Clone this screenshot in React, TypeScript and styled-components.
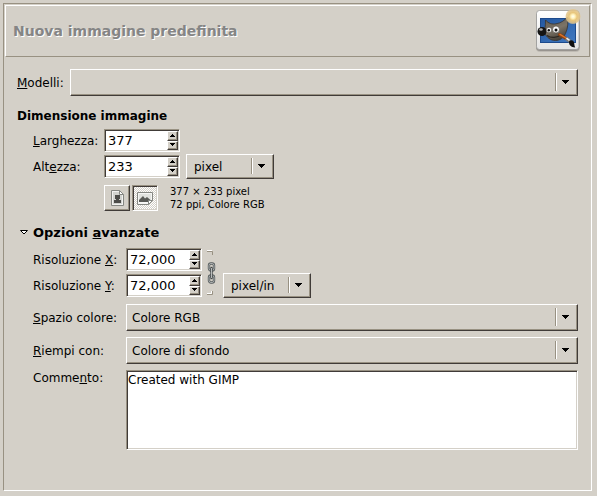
import React, { useId, useState } from 'react';
import styled, { createGlobalStyle, css } from 'styled-components';

const c = {
  bg: '#d4d0c8',
  light: '#ffffff',
  mid: '#989182',
  dark: '#403b38',
  title: '#858585',
};

const GlobalStyle = createGlobalStyle`
  *, *::before, *::after { box-sizing: border-box; }
  html, body, #root { height: 100%; }
  body {
    margin: 0;
    background: ${c.bg};
    color: #000;
    font: 12px/15px "DejaVu Sans", Verdana, sans-serif;
  }
  button, input, select, textarea { font: inherit; color: inherit; margin: 0; }
`;

const raised = css`
  border: 1px solid;
  border-color: ${c.light} ${c.dark} ${c.dark} ${c.light};
  box-shadow: inset -1px -1px ${c.mid};
`;

const sunken = css`
  border: 1px solid;
  border-color: ${c.mid} ${c.light} ${c.light} ${c.mid};
  box-shadow: inset 1px 1px ${c.dark}, inset -1px -1px ${c.bg};
`;

const Page = styled.div`
  display: flex;
  min-height: 100%;
  padding: 3px 5px 5px 3px;
`;

const Frame = styled.form`
  flex: 1;
  min-width: 0;
  border: 1px solid;
  border-color: ${c.mid} ${c.light} ${c.light} ${c.mid};
  padding: 1px;
`;

const Header = styled.header`
  display: flex;
  align-items: center;
  justify-content: space-between;
  height: 52px;
  padding: 0 9px 0 7px;
  border: 1px solid;
  border-color: ${c.light} ${c.mid} ${c.mid} ${c.light};
`;

const Title = styled.h1`
  margin: 0;
  font-size: 14px;
  line-height: 20px;
  font-weight: 700;
  color: ${c.title};
  text-shadow: 1px 1px ${c.light};
`;

const Content = styled.div`
  padding: 12px 12px 0;
`;

const TemplateRow = styled.div`
  display: grid;
  grid-template-columns: auto 1fr;
  column-gap: 6px;
  align-items: center;
`;

const Section = styled.section`
  margin-top: 13px;
`;

const SectionTitle = styled.h2`
  margin: 0 0 4px;
  font-size: 12px;
  line-height: 15px;
  font-weight: 700;
`;

const Expander = styled.button`
  display: flex;
  align-items: center;
  gap: 4px;
  margin: 14px 0 7px;
  padding: 0 0 0 2px;
  border: 0;
  background: none;
  font-size: 13px;
  line-height: 15px;
  font-weight: 700;
`;

const Fields = styled.div<{ $label: number }>`
  display: grid;
  grid-template-columns: ${p => p.$label}px minmax(0, 1fr);
  row-gap: 6px;
  padding-left: 16px;
`;

const Pairs = styled.div<{ $label: number }>`
  grid-column: 1 / -1;
  display: grid;
  grid-template-columns: ${p => p.$label}px 76px auto auto;
  grid-template-rows: 25px 25px;
  row-gap: 1px;
  align-items: center;
  justify-content: start;
`;

const Label = styled.label<{ $top?: boolean }>`
  grid-column: 1;
  align-self: ${p => (p.$top ? 'start' : 'center')};
  padding-top: ${p => (p.$top ? 1 : 2)}px;
  white-space: nowrap;
`;

const Combo = styled.div<{ $small?: boolean }>`
  ${raised}
  display: grid;
  height: ${p => (p.$small ? 25 : 27)}px;
  min-width: ${p => (p.$small ? 88 : 0)}px;
`;

const Select = styled.select<{ $small?: boolean }>`
  grid-area: 1 / 1;
  width: 100%;
  min-width: 0;
  appearance: none;
  border: 0;
  border-radius: 0;
  background: none;
  outline: none;
  padding: 2px 26px 0 ${p => (p.$small ? 7 : 5)}px;
`;

const Indicator = styled.span`
  grid-area: 1 / 1;
  justify-self: end;
  display: flex;
  align-items: center;
  margin: 3px 8px 4px 0;
  padding-left: 6px;
  border-left: 1px solid ${c.mid};
  box-shadow: inset 1px 0 ${c.light};
  pointer-events: none;
`;

const Spin = styled.div`
  ${sunken}
  grid-column: 2;
  display: flex;
  height: 23px;
  padding: 1px;
  background: #fff;
`;

const SpinInput = styled.input`
  flex: 1;
  width: 0;
  border: 0;
  padding: 0 0 0 2px;
  background: none;
  outline: none;
  font-size: 13px;
`;

const SpinButtons = styled.span`
  display: grid;
  grid-template-rows: 1fr 1fr;
  width: 11px;
`;

const SpinButton = styled.button`
  ${raised}
  display: grid;
  place-items: center;
  min-height: 0;
  padding: 0 1px 1px 0;
  background: ${c.bg};
`;

const UnitSlot = styled.div<{ $column: number }>`
  grid-column: ${p => p.$column};
  grid-row: 2;
  margin-left: 6px;
`;

const Orientation = styled.div`
  grid-column: 2;
  display: flex;
  align-items: center;
  gap: 2px;
`;

const Toggle = styled.button<{ $on: boolean }>`
  display: grid;
  place-items: center;
  width: 26px;
  height: 26px;
  padding: 0;
  background: ${c.bg};
  ${p => (p.$on ? sunken : raised)}
  ${p => p.$on && css`
    background: repeating-conic-gradient(#fff 0 25%, ${c.bg} 0 50%) 0 0 / 2px 2px;
  `}
`;

const Info = styled.p`
  margin: 0 0 0 10px;
  font-size: 10px;
  line-height: 13px;
`;

const ChainButton = styled.button`
  grid-column: 3;
  grid-row: 1 / 3;
  display: block;
  align-self: center;
  width: 15px;
  padding: 0 0 0 4px;
  border: 0;
  background: none;
  svg { display: block; }
`;

const Comment = styled.textarea`
  ${sunken}
  display: block;
  width: 100%;
  height: 80px;
  padding: 2px 1px;
  background: #fff;
  border-radius: 0;
  outline: none;
  resize: none;
`;

const DownArrow = () => (
  <svg width="7" height="4" viewBox="0 0 7 4" shapeRendering="crispEdges" aria-hidden>
    <path d="M0 0h7v1h-1v1h-1v1h-1v1h-1v-1h-1v-1h-1v-1h-1z" />
  </svg>
);

const SpinArrow = ({ up }: { up?: boolean }) => (
  <svg width="5" height="3" viewBox="0 0 5 3" shapeRendering="crispEdges" aria-hidden>
    <path d={up ? 'M2 0h1v1h1v1h1v1h-5v-1h1v-1h1z' : 'M0 0h5v1h-1v1h-1v1h-1v-1h-1v-1h-1z'} />
  </svg>
);

const PortraitIcon = () => (
  <svg width="13" height="16" viewBox="0 0 13 16" aria-hidden>
    <path d="M.5.5h8l4 4v11H.5z" fill="#f2f2f0" stroke="#858782" />
    <path d="M2 2h6v3h3v9H2z" fill="#d2d3cf" />
    <path d="M8.5.5v4h4z" fill="#fff" stroke="#858782" />
    <path d="M4 5h5v4H8v1h2v3H3v-3h2V9H4z" fill="#4c4c49" />
  </svg>
);

const LandscapeIcon = () => (
  <svg width="16" height="13" viewBox="0 0 16 13" aria-hidden>
    <path d="M.5.5h15v8l-4 4H.5z" fill="#f6f6f4" stroke="#858782" />
    <path d="M2 2h12v7H2z" fill="#e2e3df" />
    <path d="M2 10V8l4-4 2 2.500L10 5l4 3.500V10z" fill="#595a56" />
    <path d="M11.500 12.500v-4h4z" fill="#fff" stroke="#858782" />
  </svg>
);

const ChainIcon = () => (
  <svg width="11" height="46" viewBox="0 0 11 46" fill="none" aria-hidden>
    <path d="M1 1.500h5.500V5M1 44.500h5.500V41" stroke={c.mid} />
    <path d="M1 .5h5M1 43.500h4.500V41" stroke="#fff" />
    <rect x="3" y="13.500" width="5" height="7" rx="2" stroke="#555b5c" strokeWidth="2.400" />
    <rect x="3" y="25.500" width="5" height="7" rx="2" stroke="#555b5c" strokeWidth="2.400" />
    <rect x="3" y="13.500" width="5" height="7" rx="2" stroke="#c3c7c7" strokeWidth=".8" />
    <rect x="3" y="25.500" width="5" height="7" rx="2" stroke="#c3c7c7" strokeWidth=".8" />
    <path d="M5.500 18v10" stroke="#44494a" strokeWidth="2.400" strokeLinecap="round" />
    <path d="M5.500 18v10" stroke="#d5d8d8" strokeWidth=".8" />
  </svg>
);

const WilberIcon = () => (
  <svg width="44" height="46" viewBox="0 -2 44 46" overflow="visible" aria-hidden>
    <defs>
      <linearGradient id="card" x2="0" y2="1">
        <stop stopColor="#ffffff" />
        <stop offset="1" stopColor="#e4e4e4" />
      </linearGradient>
      <linearGradient id="sky" x2="1" y2="1">
        <stop stopColor="#2458a0" />
        <stop offset="1" stopColor="#4078c0" />
      </linearGradient>
      <linearGradient id="fur" x2=".4" y2="1">
        <stop stopColor="#5c554a" />
        <stop offset=".6" stopColor="#7c7467" />
        <stop offset="1" stopColor="#4b453c" />
      </linearGradient>
      <radialGradient id="glow">
        <stop stopColor="#fffff5" />
        <stop offset=".25" stopColor="#fff2bd" />
        <stop offset=".5" stopColor="#e8c67c" />
        <stop offset=".85" stopColor="#e2c48a" stopOpacity=".85" />
        <stop offset="1" stopColor="#e6c88c" stopOpacity="0" />
      </radialGradient>
    </defs>
    <rect x="0" y="2" width="44" height="40" rx="4" fill="#000" opacity=".1" />
    <rect x="0" y="1.500" width="43.500" height="39.500" rx="4" fill="#000" opacity=".2" />
    <rect x=".5" y=".5" width="42.500" height="39" rx="3" fill="url(#card)" stroke="#9b9b99" strokeWidth=".8" />
    <rect x="4.500" y="8.500" width="35" height="24" fill="url(#sky)" stroke="#1c4a8d" />
    <path d="M9.500 10c3 3.500 6.500 4.500 10.500 3.800C25 13 28.500 10.500 31.500 7c.8 5 .5 11-2 16.500-2 4.300-5.500 7-10 7-5.500 0-8.500-3.500-10.500-6.500-1-3 .8-8 .5-14z" fill="url(#fur)" stroke="#39342e" strokeWidth=".8" />
    <path d="M11 25.500c4 3 10.500 2.500 14-1" fill="none" stroke="#2c2823" strokeWidth="1.200" />
    <circle cx="6" cy="21.500" r="4.500" fill="#151515" />
    <ellipse cx="5" cy="19.500" rx="1.800" ry="1.200" fill="#aaa" />
    <circle cx="13" cy="20" r="2.800" fill="#eee" stroke="#49443c" strokeWidth=".6" />
    <circle cx="20" cy="19.500" r="3.500" fill="#f7f7f7" stroke="#49443c" strokeWidth=".6" />
    <circle cx="12.800" cy="20.300" r="1.200" fill="#111" />
    <circle cx="20" cy="20" r="1.500" fill="#111" />
    <path d="M23.500 24.500l6.500 4" stroke="#8e3f10" strokeWidth="3" strokeLinecap="round" />
    <path d="M24 24.300l6 3.700" stroke="#d9752b" strokeWidth="1.400" strokeLinecap="round" />
    <path d="M30 28.300l4 3" stroke="#777" strokeWidth="3.600" />
    <path d="M30.500 28.200l3 2.200" stroke="#eee" strokeWidth="1.500" />
    <path d="M33 31.500c2-2 4.500-1.200 5 .8.500 2 .2 3.200 1.200 5.200-4-.3-6.500-2.200-6.200-6z" fill="#101010" />
    <circle cx="37" cy="6.500" r="8" fill="url(#glow)" />
  </svg>
);

interface ComboProps {
  id: string;
  label?: string;
  options: string[];
  small?: boolean;
}

function ComboBox({ id, label, options, small }: ComboProps) {
  return (
    <Combo $small={small}>
      <Select id={id} aria-label={label} $small={small}>
        {options.map(o => <option key={o}>{o}</option>)}
      </Select>
      <Indicator><DownArrow /></Indicator>
    </Combo>
  );
}

function SpinBox({ id, initial, decimals = 0 }: { id: string; initial: number; decimals?: number }) {
  const format = (n: number) => n.toFixed(decimals).replace('.', ',');
  const [text, setText] = useState(format(initial));
  const step = (d: number) =>
    setText(format(Math.max(1, (parseFloat(text.replace(',', '.')) || 0) + d)));
  return (
    <Spin>
      <SpinInput id={id} value={text} inputMode="decimal" onChange={e => setText(e.target.value)} />
      <SpinButtons>
        <SpinButton type="button" aria-label="Aumenta" onClick={() => step(1)}><SpinArrow up /></SpinButton>
        <SpinButton type="button" aria-label="Diminuisci" onClick={() => step(-1)}><SpinArrow /></SpinButton>
      </SpinButtons>
    </Spin>
  );
}

export default function App() {
  const id = useId();
  const [landscape, setLandscape] = useState(true);
  const [open, setOpen] = useState(true);
  const [linked, setLinked] = useState(true);

  return (
    <>
      <GlobalStyle />
      <Page>
        <Frame onSubmit={e => e.preventDefault()}>
          <Header>
            <Title>Nuova immagine predefinita</Title>
            <WilberIcon />
          </Header>
          <Content>
            <TemplateRow>
              <Label htmlFor={id + 'tpl'}><u>M</u>odelli:</Label>
              <ComboBox id={id + 'tpl'} options={['']} />
            </TemplateRow>

            <Section>
              <SectionTitle>Dimensione immagine</SectionTitle>
              <Fields $label={71}>
                <Pairs $label={71}>
                  <Label htmlFor={id + 'w'}><u>L</u>arghezza:</Label>
                  <SpinBox id={id + 'w'} initial={377} />
                  <Label htmlFor={id + 'h'}>Alt<u>e</u>zza:</Label>
                  <SpinBox id={id + 'h'} initial={233} />
                  <UnitSlot $column={3}>
                    <ComboBox small id={id + 'unit'} label="Unità" options={['pixel']} />
                  </UnitSlot>
                </Pairs>
                <Orientation>
                  <Toggle type="button" $on={!landscape} aria-pressed={!landscape} aria-label="Verticale" onClick={() => setLandscape(false)}>
                    <PortraitIcon />
                  </Toggle>
                  <Toggle type="button" $on={landscape} aria-pressed={landscape} aria-label="Orizzontale" onClick={() => setLandscape(true)}>
                    <LandscapeIcon />
                  </Toggle>
                  <Info>377 × 233 pixel<br />72 ppi, Colore RGB</Info>
                </Orientation>
              </Fields>
            </Section>

            <Expander type="button" aria-expanded={open} onClick={() => setOpen(!open)}>
              <svg width="10" height="7" viewBox="0 0 10 7" aria-hidden>
                <path d="M1.500 1.500h7L5 5z" fill="#fff" stroke="#000" />
              </svg>
              <span>Opzioni <u>a</u>vanzate</span>
            </Expander>
            {open && (
              <Fields $label={93}>
                <Pairs $label={93}>
                  <Label htmlFor={id + 'x'}>Risoluzione <u>X</u>:</Label>
                  <SpinBox id={id + 'x'} initial={72} decimals={3} />
                  <Label htmlFor={id + 'y'}>Risoluzione <u>Y</u>:</Label>
                  <SpinBox id={id + 'y'} initial={72} decimals={3} />
                  <ChainButton type="button" aria-label="Collega" aria-pressed={linked} onClick={() => setLinked(!linked)}>
                    <ChainIcon />
                  </ChainButton>
                  <UnitSlot $column={4}>
                    <ComboBox small id={id + 'res'} label="Unità di risoluzione" options={['pixel/in']} />
                  </UnitSlot>
                </Pairs>
                <Label htmlFor={id + 'cs'}><u>S</u>pazio colore:</Label>
                <ComboBox id={id + 'cs'} options={['Colore RGB', 'Scala di grigi']} />
                <Label htmlFor={id + 'fill'}><u>R</u>iempi con:</Label>
                <ComboBox id={id + 'fill'} options={['Colore di sfondo', 'Bianco', 'Trasparenza']} />
                <Label $top htmlFor={id + 'c'}>Comme<u>n</u>to:</Label>
                <Comment id={id + 'c'} defaultValue="Created with GIMP" spellCheck={false} />
              </Fields>
            )}
          </Content>
        </Frame>
      </Page>
    </>
  );
}
